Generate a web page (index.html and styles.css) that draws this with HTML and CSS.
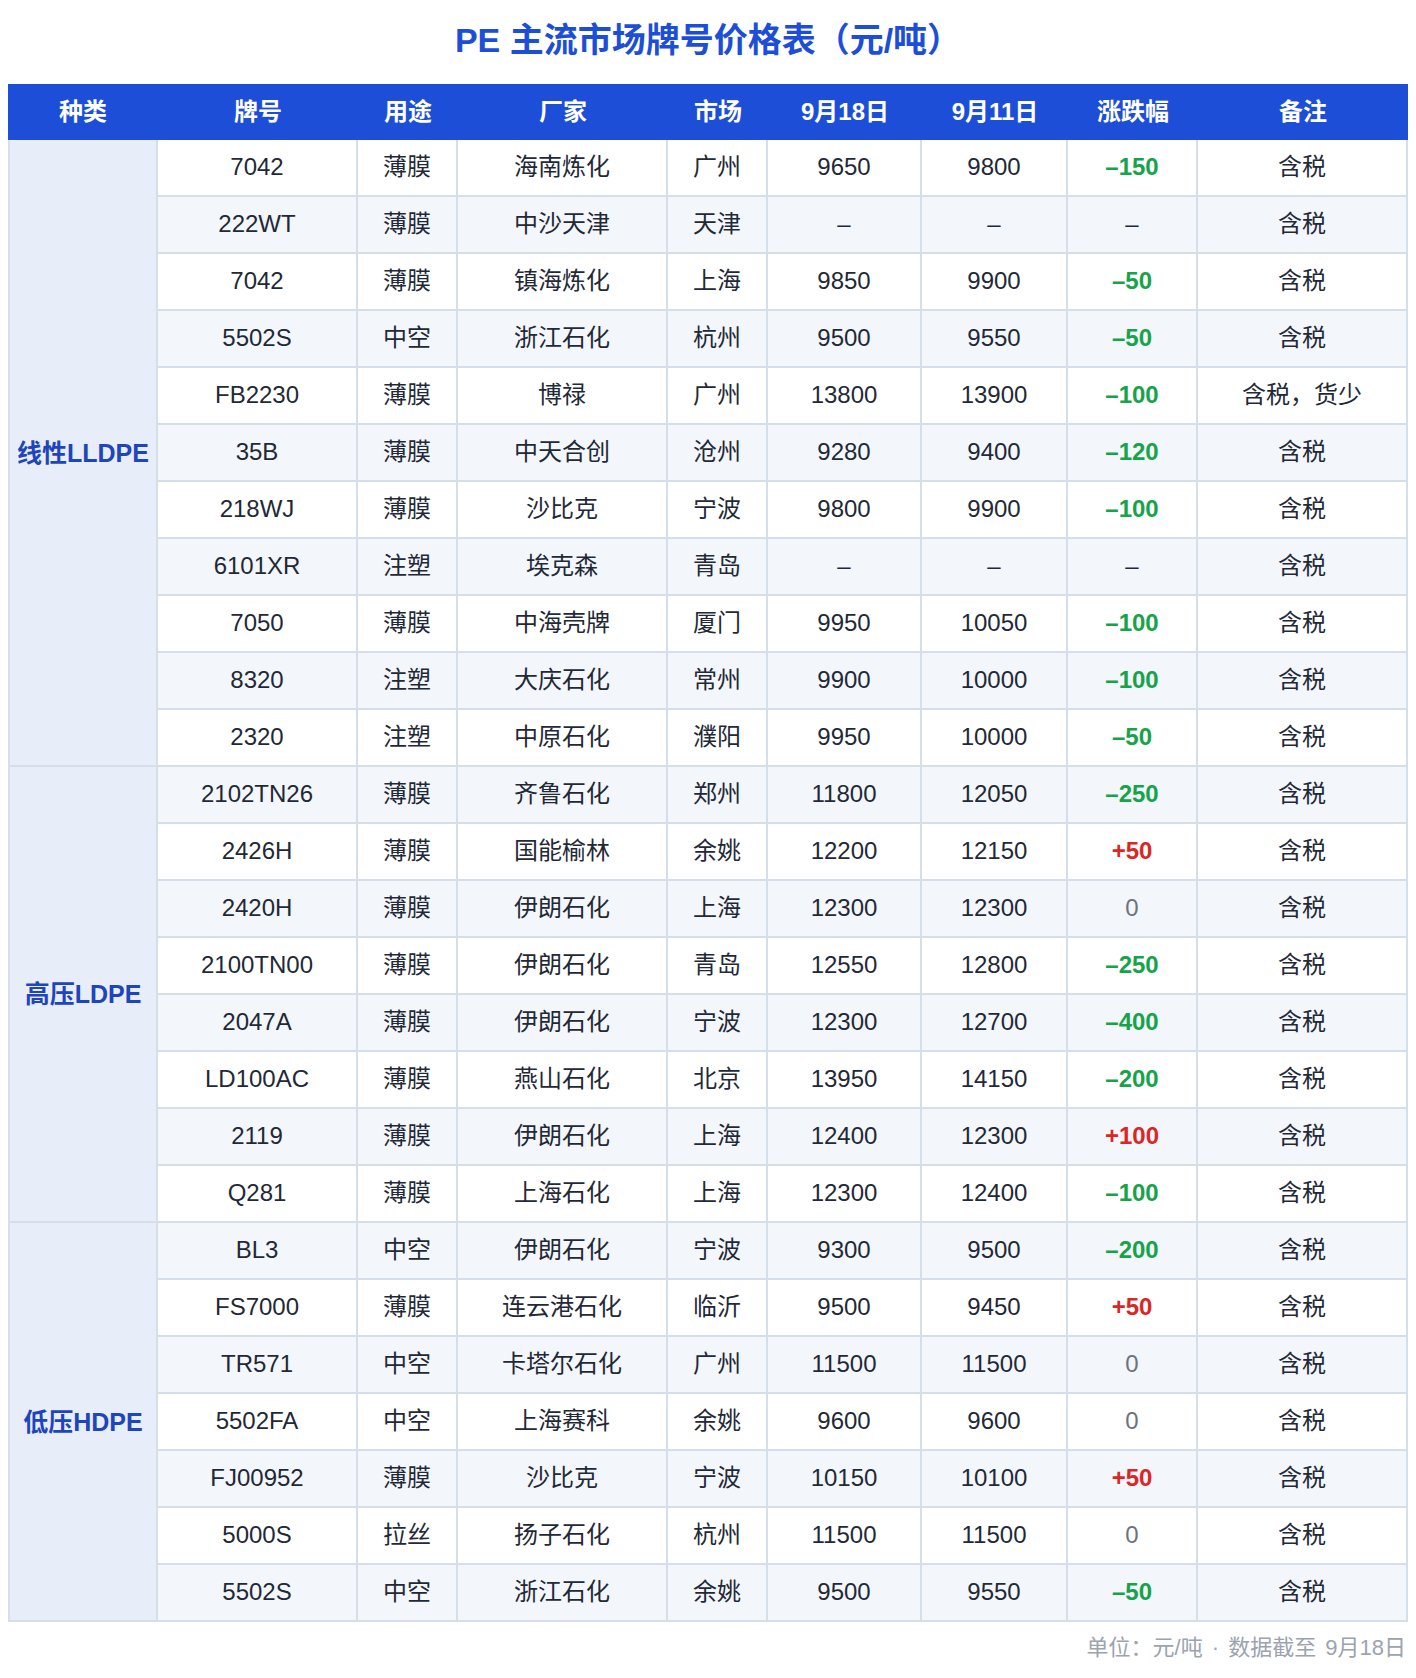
FILE: index.html
```html
<!DOCTYPE html>
<html lang="zh-CN">
<head>
<meta charset="utf-8">
<title>PE 主流市场牌号价格表</title>
<link rel="stylesheet" href="styles.css">
</head>
<body>
<h1 class="title">PE 主流市场牌号价格表（元/吨）</h1>
<table class="price-table">
  <colgroup>
    <col class="c-type"><col class="c-grade"><col class="c-use"><col class="c-maker"><col class="c-market"><col class="c-d1"><col class="c-d2"><col class="c-chg"><col class="c-note">
  </colgroup>
  <thead>
    <tr><th>种类</th><th>牌号</th><th>用途</th><th>厂家</th><th>市场</th><th>9月18日</th><th>9月11日</th><th>涨跌幅</th><th>备注</th></tr>
  </thead>
  <tbody>
    <tr><td class="cat" rowspan="11">线性LLDPE</td><td>7042</td><td>薄膜</td><td>海南炼化</td><td>广州</td><td>9650</td><td>9800</td><td class="down">–150</td><td>含税</td></tr>
    <tr><td>222WT</td><td>薄膜</td><td>中沙天津</td><td>天津</td><td>–</td><td>–</td><td>–</td><td>含税</td></tr>
    <tr><td>7042</td><td>薄膜</td><td>镇海炼化</td><td>上海</td><td>9850</td><td>9900</td><td class="down">–50</td><td>含税</td></tr>
    <tr><td>5502S</td><td>中空</td><td>浙江石化</td><td>杭州</td><td>9500</td><td>9550</td><td class="down">–50</td><td>含税</td></tr>
    <tr><td>FB2230</td><td>薄膜</td><td>博禄</td><td>广州</td><td>13800</td><td>13900</td><td class="down">–100</td><td>含税，货少</td></tr>
    <tr><td>35B</td><td>薄膜</td><td>中天合创</td><td>沧州</td><td>9280</td><td>9400</td><td class="down">–120</td><td>含税</td></tr>
    <tr><td>218WJ</td><td>薄膜</td><td>沙比克</td><td>宁波</td><td>9800</td><td>9900</td><td class="down">–100</td><td>含税</td></tr>
    <tr><td>6101XR</td><td>注塑</td><td>埃克森</td><td>青岛</td><td>–</td><td>–</td><td>–</td><td>含税</td></tr>
    <tr><td>7050</td><td>薄膜</td><td>中海壳牌</td><td>厦门</td><td>9950</td><td>10050</td><td class="down">–100</td><td>含税</td></tr>
    <tr><td>8320</td><td>注塑</td><td>大庆石化</td><td>常州</td><td>9900</td><td>10000</td><td class="down">–100</td><td>含税</td></tr>
    <tr><td>2320</td><td>注塑</td><td>中原石化</td><td>濮阳</td><td>9950</td><td>10000</td><td class="down">–50</td><td>含税</td></tr>
    <tr><td class="cat" rowspan="8">高压LDPE</td><td>2102TN26</td><td>薄膜</td><td>齐鲁石化</td><td>郑州</td><td>11800</td><td>12050</td><td class="down">–250</td><td>含税</td></tr>
    <tr><td>2426H</td><td>薄膜</td><td>国能榆林</td><td>余姚</td><td>12200</td><td>12150</td><td class="up">+50</td><td>含税</td></tr>
    <tr><td>2420H</td><td>薄膜</td><td>伊朗石化</td><td>上海</td><td>12300</td><td>12300</td><td class="flat">0</td><td>含税</td></tr>
    <tr><td>2100TN00</td><td>薄膜</td><td>伊朗石化</td><td>青岛</td><td>12550</td><td>12800</td><td class="down">–250</td><td>含税</td></tr>
    <tr><td>2047A</td><td>薄膜</td><td>伊朗石化</td><td>宁波</td><td>12300</td><td>12700</td><td class="down">–400</td><td>含税</td></tr>
    <tr><td>LD100AC</td><td>薄膜</td><td>燕山石化</td><td>北京</td><td>13950</td><td>14150</td><td class="down">–200</td><td>含税</td></tr>
    <tr><td>2119</td><td>薄膜</td><td>伊朗石化</td><td>上海</td><td>12400</td><td>12300</td><td class="up">+100</td><td>含税</td></tr>
    <tr><td>Q281</td><td>薄膜</td><td>上海石化</td><td>上海</td><td>12300</td><td>12400</td><td class="down">–100</td><td>含税</td></tr>
    <tr><td class="cat" rowspan="7">低压HDPE</td><td>BL3</td><td>中空</td><td>伊朗石化</td><td>宁波</td><td>9300</td><td>9500</td><td class="down">–200</td><td>含税</td></tr>
    <tr><td>FS7000</td><td>薄膜</td><td>连云港石化</td><td>临沂</td><td>9500</td><td>9450</td><td class="up">+50</td><td>含税</td></tr>
    <tr><td>TR571</td><td>中空</td><td>卡塔尔石化</td><td>广州</td><td>11500</td><td>11500</td><td class="flat">0</td><td>含税</td></tr>
    <tr><td>5502FA</td><td>中空</td><td>上海赛科</td><td>余姚</td><td>9600</td><td>9600</td><td class="flat">0</td><td>含税</td></tr>
    <tr><td>FJ00952</td><td>薄膜</td><td>沙比克</td><td>宁波</td><td>10150</td><td>10100</td><td class="up">+50</td><td>含税</td></tr>
    <tr><td>5000S</td><td>拉丝</td><td>扬子石化</td><td>杭州</td><td>11500</td><td>11500</td><td class="flat">0</td><td>含税</td></tr>
    <tr><td>5502S</td><td>中空</td><td>浙江石化</td><td>余姚</td><td>9500</td><td>9550</td><td class="down">–50</td><td>含税</td></tr>
  </tbody>
</table>
<p class="footnote">单位：元/吨 · 数据截至 9月18日</p>
</body>
</html>
```

FILE: styles.css
```css
body {
  margin: 8px;
  background: #ffffff;
  font-family: "Liberation Sans", "Noto Sans CJK SC", sans-serif;
  color: #1f2937;
}

.title {
  margin: 12px 0 24px;
  height: 40px;
  line-height: 40px;
  text-align: center;
  font-size: 34px;
  font-weight: 700;
  color: #1d4ed8;
}

.price-table {
  width: 1400px;
  table-layout: fixed;
  border-collapse: separate;
  border-spacing: 0;
  font-size: 24px;
  line-height: 1.2;
}

.c-type { width: 150px; }
.c-grade { width: 200px; }
.c-use { width: 100px; }
.c-maker { width: 210px; }
.c-market { width: 100px; }
.c-d1 { width: 154px; }
.c-d2 { width: 146px; }
.c-chg { width: 130px; }
.c-note { width: 210px; }

.price-table th {
  height: 56px;
  padding: 0;
  background: #1d4ed8;
  color: #ffffff;
  font-weight: 700;
  text-align: center;
}

.price-table td {
  height: 57px;
  padding: 0;
  text-align: center;
  border-right: 2px solid #d6deea;
  border-bottom: 2px solid #d6deea;
  background: #ffffff;
  box-sizing: border-box;
}

.price-table tbody tr:nth-child(even) td {
  background: #f3f6fb;
}

.price-table tbody tr td.cat {
  background: #e8eef9;
  border-left: 2px solid #d6deea;
  color: #1e45bb;
  font-size: 25px;
  font-weight: 700;
}

.down {
  color: #16a34a;
  font-weight: 700;
}

.up {
  color: #dc2626;
  font-weight: 700;
}

.flat {
  color: #6b7280;
}

.footnote {
  margin: 14px 2px 0 0;
  line-height: 24px;
  text-align: right;
  font-size: 22px;
  word-spacing: 3px;
  color: #9ca3af;
}
```
